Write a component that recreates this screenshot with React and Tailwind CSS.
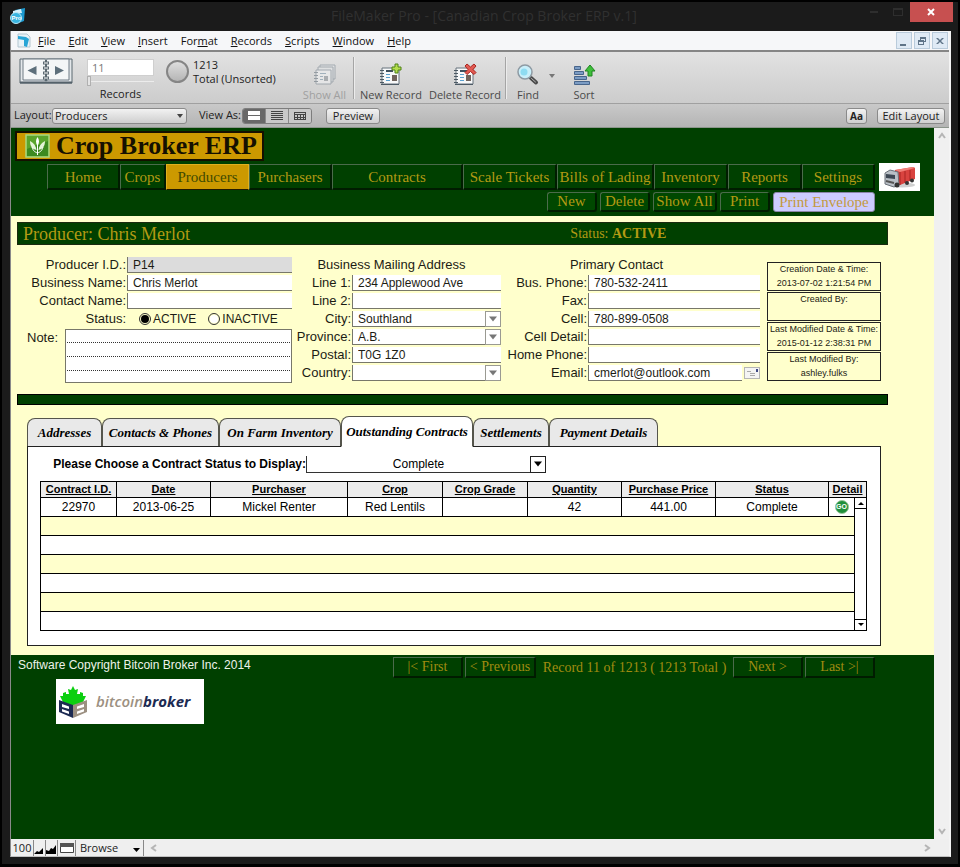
import React, { useState } from 'react';

const MENUS = [
    ['', 'F', 'ile'], ['', 'E', 'dit'], ['', 'V', 'iew'], ['', 'I', 'nsert'], ['For', 'm', 'at'],
    ['', 'R', 'ecords'], ['', 'S', 'cripts'], ['', 'W', 'indow'], ['', 'H', 'elp'],
];

const NAV = ['Home', 'Crops', 'Producers', 'Purchasers', 'Contracts', 'Scale Tickets', 'Bills of Lading', 'Inventory', 'Reports', 'Settings'];

const ACTIONS = [
    { label: 'New', width: 'w-[50px]' },
    { label: 'Delete', width: 'w-[50px]' },
    { label: 'Show All', width: 'w-[64px]' },
    { label: 'Print', width: 'w-[50px]' },
    { label: 'Print Envelope', width: 'w-[102px]', light: true },
];

const TABS = [
    { label: 'Addresses', width: 'w-[75px]' },
    { label: 'Contacts & Phones', width: 'w-[117px]' },
    { label: 'On Farm Inventory', width: 'w-[122px]' },
    { label: 'Outstanding Contracts', width: 'w-[132px]' },
    { label: 'Settlements', width: 'w-[76px]' },
    { label: 'Payment Details', width: 'w-[109px]' },
];

const COLUMNS = [
    { label: 'Contract I.D.', width: 'w-[76px]' },
    { label: 'Date', width: 'w-[94px]' },
    { label: 'Purchaser', width: 'w-[137px]' },
    { label: 'Crop', width: 'w-[95px]' },
    { label: 'Crop Grade', width: 'w-[85px]' },
    { label: 'Quantity', width: 'w-[94px]' },
    { label: 'Purchase Price', width: 'w-[94px]' },
    { label: 'Status', width: 'w-[113px]' },
    { label: 'Detail', width: 'w-[26px]' },
];

const CONTRACT = ['22970', '2013-06-25', 'Mickel Renter', 'Red Lentils', '', '42', '441.00', 'Complete'];

const STAMPS = [
    ['Creation Date & Time:', '2013-07-02 1:21:54 PM'],
    ['Created By:', ''],
    ['Last Modified Date & Time:', '2015-01-12 2:38:31 PM'],
    ['Last Modified By:', 'ashley.fulks'],
];

/* ---------- Icons ---------- */

const AppIcon = () => (
    <svg width="17" height="17" viewBox="0 0 17 17">
        <path d="M5 2l10-2-1 13-5 2z" fill="#1d9ad0" />
        <path d="M3 3l8-2 1 4-9 1z" fill="#d8f2fb" />
        <circle cx="6" cy="10" r="5.5" fill="#39b5e0" stroke="#b9e6f5" />
        <text x="1.5" y="12" fontSize="6" fontFamily="Liberation Sans" fontWeight="bold" fill="#fff">Pro</text>
    </svg>
);

const DocIcon = () => (
    <svg width="14" height="15" viewBox="0 0 14 15">
        <path d="M1 1h9l3 3v10H1z" fill="#e8f2f7" stroke="#b3c6d0" />
        <path d="M1 3l8 1 3 2-2 8-3-1V7L1 6z" fill="#27a5d6" />
    </svg>
);

const BookIcon = () => (
    <svg width="54" height="27" viewBox="0 0 54 27">
        <path d="M1 1h52v24H1z" fill="#e3e7ea" stroke="#5b6871" />
        <path d="M4 1h21c1 0 2 1 2 2 0-1 1-2 2-2h21v21H29l-2 1-2-1H4z" fill="#f4f6f7" stroke="#6e7b84" />
        <path d="M1 24.500h52" stroke="#54616a" strokeWidth="2" />
        <path d="M17.500 8v9l-9-4.500zM36 8v9l9-4.500z" fill="#5d6f7b" />
        <path d="M27 2v21" stroke="#5b6871" strokeWidth="2" />
        <path d="M24 5h6M24 10h6M24 15h6M24 20h6" stroke="#5b6871" strokeWidth="3" />
        <path d="M25 5h4M25 10h4M25 15h4M25 20h4" stroke="#fff" />
    </svg>
);

const RecordIcon = ({ mark }) => (
    <svg width="24" height="24" viewBox="0 0 24 24">
        <path d="M3 5h17v16H3z" fill="#f7f8f9" stroke="#66737d" />
        <path d="M1 7.500h4M1 10.500h4M1 13.500h4M1 16.500h4M1 19.500h4" stroke="#4c5a65" />
        <path d="M7 8h7" stroke="#3f505e" strokeWidth="2" />
        <path d="M7 11.500h4M7 14.500h4M7 17.500h4" stroke="#5aa0cf" />
        <path d="M13 12h5v6h-5z" fill="#70635c" />
        <path d="M2 21.500h18" stroke="#4c5a65" />
        {mark === 'new' && <path d="M16 1h3v3h3v3h-3v3h-3V7h-3V4h3z" fill="#b4dd4c" stroke="#4e8217" />}
        {mark === 'delete' && <path d="M14 1l3.500 3L21 1l2 2-3 3.500 3 3-2 2-3.500-3-3.500 3-2-2 3-3-3-3.500z" fill="#e25a52" stroke="#a82620" />}
    </svg>
);

const ShowAllIcon = () => (
    <svg width="24" height="24" viewBox="0 0 24 24" opacity="0.6">
        <path d="M7 2h15v14H7z" fill="#e3e5e7" stroke="#7e8a94" />
        <path d="M5 4h15v15H5z" fill="#e3e5e7" stroke="#7e8a94" />
        <path d="M3 7h15v14H3z" fill="#f0f1f2" stroke="#7e8a94" />
        <path d="M1 9.500h4M1 12.500h4M1 15.500h4M1 18.500h4" stroke="#68747e" />
        <path d="M7 10.500h6M7 13.500h3M7 16.500h3" stroke="#7d97aa" />
        <path d="M11 13h4v5h-4z" fill="#8c9298" />
    </svg>
);

const FindIcon = () => (
    <svg width="24" height="24" viewBox="0 0 24 24">
        <path d="M13 14l2 1" stroke="#777" strokeWidth="2" />
        <path d="M15 15l5 4.500" stroke="#4a4a4a" strokeWidth="4" strokeLinecap="round" />
        <path d="M15.500 15.500l4 3.500" stroke="#b5b5b5" strokeLinecap="round" />
        <circle cx="9" cy="9" r="7" fill="#c9effa" stroke="#8e9aa3" strokeWidth="1.500" />
        <circle cx="8" cy="9" r="3.500" fill="#8edcf2" />
    </svg>
);

const SortIcon = () => (
    <svg width="24" height="24" viewBox="0 0 24 24">
        <g fill="#7b9cc4" stroke="#48658b">
            <path d="M2.500 3.500h6v3h-6zM2.500 8.500h9v3h-9zM2.500 13.500h12v3h-12zM2.500 18.500h15v3h-15z" />
        </g>
        <path d="M18 2l5 6h-3v5h-4V8h-3z" fill="#3fbf3b" stroke="#1e8420" />
    </svg>
);

const CropLogo = () => (
    <svg width="25" height="24" viewBox="0 0 25 24">
        <rect x="1" y="1" width="23" height="22" fill="#5aa52c" stroke="#a9d77e" strokeWidth="1.500" />
        <path d="M2 15c8-4 14-4 21-8v15H2z" fill="#3c8a20" />
        <path d="M12.500 3c2 3 2 6 0 9-2-3-2-6 0-9z" fill="#fff" />
        <path d="M5 7c4 2 6 5 6.500 9C7 15 5 12 5 7zM20 7c-4 2-6 5-6.500 9 4.500-1 6.500-4 6.500-9z" fill="#e4f4d6" />
        <path d="M12.500 11v10M7 13c1 4 3 5 5.500 6M18 13c-1 4-3 5-5.500 6" stroke="#fff" fill="none" />
    </svg>
);

const TruckIcon = () => (
    <svg width="34" height="24" viewBox="0 0 34 24">
        <ellipse cx="19" cy="20" rx="13" ry="2.500" fill="#d0d0d0" />
        <path d="M12 5l18-3 2 1v11l-15 6-5-2z" fill="#d9433f" />
        <path d="M12 5l18-3 2 1-15 4z" fill="#f08078" />
        <path d="M17 7v13M22 6v12M27 5v11" stroke="#a92522" />
        <path d="M2 8l5-3 8 2 1 13-5 2-9-3z" fill="#b9bfc6" stroke="#6a7078" />
        <path d="M3 9l9 1v4l-9-1z" fill="#3e4854" />
        <path d="M3 16l8 2" stroke="#555" strokeWidth="2" />
        <circle cx="14" cy="20" r="2.500" fill="#333" />
        <circle cx="24" cy="18" r="2" fill="#333" />
        <circle cx="29" cy="15.500" r="2" fill="#333" />
    </svg>
);

const BrokerLogo = () => (
    <svg width="30" height="34" viewBox="0 0 30 34">
        <path d="M15 1l2 4 3-1-1 5 3 0 0-2 3 1 0 3 3 0-3 6-10 4-10-4-3-6 3 0 0-3 3-1 0 2 3 0-1-5 3 1z" fill="#0bcf10" />
        <path d="M1 15l14 5v13L1 27z" fill="#1c2a52" />
        <path d="M29 15l-14 5v13l14-6z" fill="#9c9081" />
        <path d="M4 19l7 2.500v2.500l-7-2zM4 24l7 2.500V29l-7-2.500zM26 19l-7 2.500v2.500l7-2zM26 24l-7 2.500V29l7-2.500z" fill="#fff" />
    </svg>
);

const Triangle = () => (
    <svg width="8" height="6" viewBox="0 0 8 6"><path d="M0 .5h8L4 5.500z" fill="currentColor" /></svg>
);

const Chevron = ({ d }) => (
    <svg width="8" height="8" viewBox="0 0 8 8" fill="none" stroke="#b5b5b5" strokeWidth="2"><path d={d} /></svg>
);

/* ---------- Form pieces ---------- */

const Field = ({ id, label, value = '', labelWidth, gray, children }) => (
    <div className="flex h-[18px] items-center">
        <label htmlFor={id} className={`${labelWidth} shrink-0 whitespace-nowrap pr-px text-right text-[13px] leading-[18px]`}>{label}</label>
        <input
            id={id}
            defaultValue={value}
            className={`h-4 min-w-0 flex-1 border-b border-l border-[#77776a] pl-[5px] text-xs leading-[15px] outline-none ${gray ? 'bg-[#dcdcdc]' : 'bg-white'}`}
        />
        {children}
    </div>
);

const SelectField = ({ id, label, value = '', labelWidth }) => (
    <div className="flex h-[18px] items-center">
        <label htmlFor={id} className={`${labelWidth} shrink-0 whitespace-nowrap pr-px text-right text-[13px] leading-[18px]`}>{label}</label>
        <div className="relative h-4 min-w-0 flex-1">
            <select id={id} defaultValue={value} className="block h-4 w-full appearance-none border-b border-l border-[#77776a] bg-white pl-[5px] text-xs leading-4 outline-none">
                <option>{value}</option>
            </select>
            <span className="pointer-events-none absolute inset-y-0 right-0 flex w-4 items-center justify-center border border-[#9a9a92] bg-white text-[#777]">
                <Triangle />
            </span>
        </div>
    </div>
);

const ToolButton = ({ icon, label, disabled, width }) => (
    <button disabled={disabled} className={`mt-[11px] flex flex-col items-center text-[11px] leading-4 ${disabled ? 'text-[#a0a0a0]' : 'text-[#4a4a4a]'} ${width}`}>
        {icon}
        <span className="whitespace-nowrap">{label}</span>
    </button>
);

const bevel = 'rounded-[3px] border border-[#8a8a8a] bg-gradient-to-b from-[#f2f2f2] to-[#cfcfcf]';
const darkBevel = 'border-t border-l border-b-2 border-r-2 border-t-[#4b6b4b] border-l-[#4b6b4b] border-b-[#001c00] border-r-[#001c00]';

const TitleBar = () => (
    <div className="flex h-[29px] items-start justify-between pl-2">
        <div className="flex h-[29px] w-32 items-center"><AppIcon /></div>
        <div className="whitespace-nowrap pt-0.5 text-sm leading-6 text-[#303030]">FileMaker Pro - [Canadian Crop Broker ERP v.1]</div>
        <div className="flex w-32 justify-end pr-[5px]">
            <button aria-label="Minimize" className="flex h-[19px] w-6 items-center justify-center">
                <span className="h-0.5 w-2 bg-[#2e2e2e]" />
            </button>
            <button aria-label="Maximize" className="flex h-[19px] w-6 items-center justify-center">
                <span className="h-2 w-2.5 border border-t-2 border-[#2e2e2e]" />
            </button>
            <button aria-label="Close" className="flex h-5 w-[43px] items-center justify-center bg-[#c75050]">
                <svg width="8" height="8" viewBox="0 0 8 8" stroke="#fff" strokeWidth="2"><path d="M1 1l6 6M7 1L1 7" /></svg>
            </button>
        </div>
    </div>
);

const MenuBar = () => (
    <div className="flex h-[21px] items-center border-b-2 border-[#858585] bg-[#f6f7f9] pl-1.5 text-[#111]">
        <DocIcon />
        <nav className="flex flex-1 gap-[13px] pl-[7px] text-[11px]">
            {MENUS.map(([pre, key, rest]) => (
                <button key={key + rest} className="leading-[18px]">{pre}<span className="underline">{key}</span>{rest}</button>
            ))}
        </nav>
        <div className="flex gap-0.5 pr-px text-[#5f7488]">
            {['M2 9h6v2H2z', 'M4 2h6v5H8v3H2V5h2zM5 4v1h3v1h1V4zM3 7v2h4V7z', 'M2 3h2l2 2 2-2h2L7 6l3 3H8L6 7 4 9H2l3-3z'].map((d, i) => (
                <button key={d} aria-label={['Minimize record window', 'Restore record window', 'Close record window'][i]} className="flex h-[17px] w-4 items-center justify-center border border-[#b9cbdb] bg-[#dfeaf5]">
                    <svg width="12" height="12" viewBox="0 0 12 12" fill="currentColor" fillRule="evenodd"><path d={d} /></svg>
                </button>
            ))}
        </div>
    </div>
);

const Toolbar = () => (
    <div className="flex h-[52px] items-start border-b border-[#a0a0a0] bg-gradient-to-b from-[#e2e2e2] to-[#cccccc] pl-2 text-[11px] text-[#222]">
        <button aria-label="Flip through records" className="mt-1.5"><BookIcon /></button>
        <div className="ml-3.5 mt-[7px] flex w-[67px] flex-col">
            <input aria-label="Record number" defaultValue="11" className="h-[17px] w-full border border-[#cfcfcf] bg-white pl-1 text-[11px] text-[#777] outline-none" />
            <div className="flex h-2.5 items-center">
                <span className="h-2.5 w-1 border border-[#b0b0b0] bg-[#e4e4e4]" />
                <span className="h-px flex-1 bg-[#ececec]" />
            </div>
            <span className="text-center leading-4">Records</span>
        </div>
        <button aria-label="Found set" className="ml-3 mt-2 h-[23px] w-[23px] rounded-full border-2 border-[#858585] bg-gradient-to-b from-[#dedede] to-[#b5b5b5]" />
        <div className="ml-1 mt-1.5 w-[103px] whitespace-nowrap leading-[14px]">
            <div>1213</div>
            <div>Total (Unsorted)</div>
        </div>
        <ToolButton icon={<ShowAllIcon />} label="Show All" disabled width="w-[57px]" />
        <span className="mt-[5px] h-[42px] w-0.5 border-l border-[#a5a5a5] bg-[#ececec]" />
        <ToolButton icon={<RecordIcon mark="new" />} label="New Record" width="w-[72px]" />
        <ToolButton icon={<RecordIcon mark="delete" />} label="Delete Record" width="w-[76px]" />
        <span className="ml-0.5 mt-[5px] h-[42px] w-0.5 border-l border-[#a5a5a5] bg-[#ececec]" />
        <ToolButton icon={<FindIcon />} label="Find" width="w-[42px]" />
        <button aria-label="Find options" className="mt-[22px] text-[#777]"><svg width="6" height="4" viewBox="0 0 6 4"><path d="M0 0h6L3 4z" fill="currentColor" /></svg></button>
        <span className="w-2" />
        <ToolButton icon={<SortIcon />} label="Sort" width="w-[42px]" />
    </div>
);

const LayoutBar = () => (
    <div className="flex h-6 items-center border-b border-[#8c958c] bg-gradient-to-b from-[#c9c9c9] to-[#b4b4b4] pl-[3px] pr-1 text-[11px] text-[#222]">
        <label htmlFor="layout" className="w-[38px]">Layout:</label>
        <div className="relative">
            <select id="layout" className={`${bevel} block h-4 w-[135px] appearance-none pl-0.5 leading-[14px] outline-none`}>
                <option>Producers</option>
            </select>
            <svg width="6" height="4" viewBox="0 0 6 4" className="pointer-events-none absolute right-1 top-1.5"><path d="M0 0h6L3 4z" fill="#444" /></svg>
        </div>
        <span className="ml-3 w-[43px] whitespace-nowrap">View As:</span>
        <div className="flex h-4 w-[70px] overflow-hidden rounded-[3px] border border-[#7d7d7d]">
            <button aria-label="Form view" className="flex flex-1 items-center justify-center bg-[#686868]">
                <svg width="14" height="10" viewBox="0 0 14 10" fill="#fff"><path d="M1 0h12v4H1zM1 5h12v4H1z" /></svg>
            </button>
            <button aria-label="List view" className="flex flex-1 items-center justify-center border-x border-[#8a8a8a] bg-[#c9c9c9]">
                <svg width="14" height="10" viewBox="0 0 14 10" fill="#444"><path d="M1 0h12v1H1zM1 2h12v1H1zM1 4h12v1H1zM1 6h12v1H1zM1 8h12v1H1z" /></svg>
            </button>
            <button aria-label="Table view" className="flex flex-1 items-center justify-center bg-[#c9c9c9]">
                <svg width="14" height="10" viewBox="0 0 14 10" stroke="#444" fill="none"><path d="M1 1.500h12M1.500 1v8M12.500 1v8M1 3.500h12M1 6.500h12M1 8.500h12M4.500 3v6M7.500 3v6M10.500 3v6" /></svg>
            </button>
        </div>
        <button className={`${bevel} ml-3.5 h-4 w-[54px] leading-[14px]`}>Preview</button>
        <div className="ml-auto flex gap-2.5">
            <button aria-label="Formatting bar" className={`${bevel} h-4 w-[21px] text-[10px] font-bold leading-[14px]`}>Aa</button>
            <button className={`${bevel} h-4 w-[68px] whitespace-nowrap leading-[14px]`}>Edit Layout</button>
        </div>
    </div>
);

const Header = () => (
    <header className="h-[88px] bg-[#004000] pl-1 pr-3.5 pt-[3px] font-['Liberation_Serif',serif]">
        <div className="flex h-[30px] w-[249px] items-center gap-1.5 border-2 border-[#151000] bg-[#cc9900] pl-2">
            <CropLogo />
            <h1 className="whitespace-nowrap text-[26px] font-bold leading-[26px] text-[#151000]">Crop Broker ERP</h1>
        </div>
        <div className="mt-0.5 flex pl-8">
            <div className="flex-1">
                <nav className="mt-px grid h-[26px] grid-cols-[73fr_46fr_83fr_83fr_131fr_94fr_97fr_74fr_74fr_73fr]">
                    {NAV.map(name => (
                        <button
                            key={name}
                            className={`whitespace-nowrap text-[15px] leading-[22px] ${name === 'Producers' ? 'border border-[#e0b020] border-b-[#221a00] bg-[#cc9900] text-[#3f4a00]' : `${darkBevel} text-[#b39a14]`}`}
                        >
                            {name}
                        </button>
                    ))}
                </nav>
                <div className="mt-0.5 flex justify-end gap-[3px]">
                    {ACTIONS.map(({ label, width, light }) => (
                        <button
                            key={label}
                            className={`${width} h-5 whitespace-nowrap rounded-[3px] text-[15px] leading-[17px] ${light ? 'border border-[#8a86a8] bg-[#ccccff] text-[#c39a3c]' : `${darkBevel} bg-[#004800] text-[#b39a14]`}`}
                        >
                            {label}
                        </button>
                    ))}
                </div>
            </div>
            <div className="ml-1 flex h-7 w-[41px] items-center justify-center bg-white"><TruckIcon /></div>
        </div>
    </header>
);

const Details = () => {
    const [status, setStatus] = useState('ACTIVE');

    return (
        <section className="grid grid-cols-[265fr_209fr_259fr_121fr] pl-4 pr-[53px] pt-[11px] text-[#1c1c14]">
            <div className="min-w-0">
                <Field id="producer-id" label="Producer I.D.:" value="P14" labelWidth="w-[100px]" gray />
                <Field id="business-name" label="Business Name:" value="Chris Merlot" labelWidth="w-[100px]" />
                <Field id="contact-name" label="Contact Name:" labelWidth="w-[100px]" />
                <div className="flex h-[18px] items-center text-xs">
                    <span className="w-[100px] pr-px text-right text-[13px] leading-[18px]">Status:</span>
                    {['ACTIVE', 'INACTIVE'].map(s => (
                        <label key={s} className="ml-3 flex items-center gap-0.5">
                            <input
                                type="radio"
                                name="status"
                                checked={status === s}
                                onChange={() => setStatus(s)}
                                className="h-3 w-3 appearance-none rounded-full border border-[#333] bg-white bg-clip-content p-px checked:bg-black"
                            />
                            {s}
                        </label>
                    ))}
                </div>
                <div className="flex pt-px">
                    <label htmlFor="note" className="w-[38px] text-[13px] leading-[18px]">Note:</label>
                    <textarea
                        id="note"
                        className="h-[54px] min-w-0 flex-1 resize-none border border-[#77776a] bg-white bg-[image:repeating-linear-gradient(90deg,#fff_0_1px,transparent_1px_2px),repeating-linear-gradient(transparent_0_12px,#333_12px_13px,transparent_13px_14px)] text-xs leading-[14px] outline-none"
                    />
                </div>
            </div>
            <div className="min-w-0">
                <h2 className="pr-2.5 text-center text-[13px] leading-[18px]">Business Mailing Address</h2>
                <Field id="line1" label="Line 1:" value="234 Applewood Ave" labelWidth="w-[60px]" />
                <Field id="line2" label="Line 2:" labelWidth="w-[60px]" />
                <SelectField id="city" label="City:" value="Southland" labelWidth="w-[60px]" />
                <SelectField id="province" label="Province:" value="A.B." labelWidth="w-[60px]" />
                <Field id="postal" label="Postal:" value="T0G 1Z0" labelWidth="w-[60px]" />
                <SelectField id="country" label="Country:" labelWidth="w-[60px]" />
            </div>
            <div className="min-w-0">
                <h2 className="pr-7 text-center text-[13px] leading-[18px]">Primary Contact</h2>
                <Field id="bus-phone" label="Bus. Phone:" value="780-532-2411" labelWidth="w-[87px]" />
                <Field id="fax" label="Fax:" labelWidth="w-[87px]" />
                <Field id="cell" label="Cell:" value="780-899-0508" labelWidth="w-[87px]" />
                <Field id="cell-detail" label="Cell Detail:" labelWidth="w-[87px]" />
                <Field id="home-phone" label="Home Phone:" labelWidth="w-[87px]" />
                <Field id="email" label="Email:" value="cmerlot@outlook.com" labelWidth="w-[87px]">
                    <button aria-label="Send email" className="ml-0.5">
                        <svg width="16" height="12" viewBox="0 0 16 12">
                            <rect x=".5" y=".5" width="15" height="11" fill="#f4f4f4" stroke="#b5b5b5" />
                            <path d="M3 4.500h4M6 6.500h5M6 8.500h5" stroke="#aaa" />
                            <path d="M12 2h2v3h-2z" fill="#3f4a86" />
                        </svg>
                    </button>
                </Field>
            </div>
            <div className="flex min-w-0 flex-col gap-px pl-[7px] pt-1.5">
                {STAMPS.map(([label, value]) => (
                    <div key={label} className="flex h-[29px] flex-col items-center whitespace-nowrap border border-[#222] text-[9px] leading-3">
                        <div>{label}</div>
                        <div className="pt-0.5">{value}</div>
                    </div>
                ))}
            </div>
        </section>
    );
};

const ContractsPanel = () => {
    const [tab, setTab] = useState('Outstanding Contracts');

    return (
        <section className="pb-[9px] pl-4 pr-[53px] pt-[11px]">
            <div role="tablist" className="flex h-[30px] items-end font-['Liberation_Serif',serif]">
                {TABS.map(({ label, width }) => (
                    <button
                        key={label}
                        role="tab"
                        aria-selected={tab === label}
                        onClick={() => setTab(label)}
                        className={`${width} shrink-0 whitespace-nowrap rounded-t-lg border border-b-0 border-[#55554c] text-[13px] font-bold italic text-black ${tab === label ? 'h-[30px] bg-white' : 'h-7 bg-[#e9e9e9]'}`}
                    >
                        {label}
                    </button>
                ))}
            </div>
            <div className="flex">
                <div className="w-[314px] border-t border-[#222]" />
                <div className="w-[132px] border-x border-t border-x-[#55554c] border-t-white" />
                <div className="flex-1 border-t border-[#222]" />
            </div>
            <div className="border border-t-0 border-[#222] bg-white pb-3.5 pl-3 pr-3.5 pt-[9px]">
                <div className="flex h-[17px] items-center pb-px">
                    <label htmlFor="contract-status" className="w-[266px] whitespace-nowrap text-right text-xs font-bold leading-4">Please Choose a Contract Status to Display:</label>
                    <div className="relative">
                        <select id="contract-status" className="block h-[17px] w-[240px] appearance-none border-b border-l border-[#333] bg-white pr-4 text-center text-xs leading-4 outline-none [text-align-last:center]">
                            <option>Complete</option>
                        </select>
                        <span className="pointer-events-none absolute inset-y-0 right-0 flex w-4 items-center justify-center border border-[#222] bg-white">
                            <Triangle />
                        </span>
                    </div>
                </div>
                <table className="mt-2 w-full table-fixed border-collapse border border-black text-center text-xs">
                    <colgroup>
                        {COLUMNS.map(c => <col key={c.label} className={c.width} />)}
                        <col className="w-[12px]" />
                    </colgroup>
                    <thead>
                        <tr className="h-4 bg-[#ececec]">
                            {COLUMNS.map(c => (
                                <th key={c.label} colSpan={c.label === 'Detail' ? 2 : 1} className="whitespace-nowrap border border-black p-0 text-[11px] font-bold leading-[15px] underline">{c.label}</th>
                            ))}
                        </tr>
                    </thead>
                    <tbody>
                        <tr className="h-[19px]">
                            {CONTRACT.map((cell, i) => (
                                <td key={i} className="border border-black p-0 leading-[18px]">{cell}</td>
                            ))}
                            <td className="border border-black p-0">
                                <button aria-label="Go to contract" className="mx-auto block h-3.5 w-3.5 rounded-full border border-[#9cc79c] bg-[#1f8f3a] text-center text-[7px] font-bold leading-3 text-white">GO</button>
                            </td>
                            <td rowSpan={7} className="h-px border border-black p-0">
                                <div className="flex h-full flex-col justify-between">
                                    <button aria-label="Scroll up" className="flex h-[11px] items-center justify-center border-b border-black"><svg width="6" height="4" viewBox="0 0 6 4"><path d="M0 4h6L3 1z" /></svg></button>
                                    <button aria-label="Scroll down" className="flex h-[11px] items-center justify-center border-t border-black"><svg width="6" height="4" viewBox="0 0 6 4"><path d="M0 0h6L3 3z" /></svg></button>
                                </div>
                            </td>
                        </tr>
                        {[0, 1, 2, 3, 4, 5].map(i => (
                            <tr key={i} className={`h-[19px] ${i % 2 ? 'bg-white' : 'bg-[#ffffcc]'}`}>
                                <td colSpan={9} className="border border-black p-0" />
                            </tr>
                        ))}
                    </tbody>
                </table>
            </div>
        </section>
    );
};

const Footer = () => (
    <footer className="flex flex-1 items-start justify-between bg-[#004000] pl-[7px] pr-[59px] pt-0.5">
        <div>
            <p className="text-xs leading-4 text-[#eef3ea]">Software Copyright Bitcoin Broker Inc. 2014</p>
            <div className="ml-[38px] mt-1.5 flex h-[45px] w-[148px] items-center gap-2 bg-white pl-0.5 font-['Open_Sans',sans-serif] text-[15px] font-semibold italic">
                <BrokerLogo />
                <span className="text-[#9c9081]">bitcoin<span className="font-bold text-[#1c2a52]">broker</span></span>
            </div>
        </div>
        <div className="flex items-center gap-0.5 font-['Liberation_Serif',serif] text-sm text-[#a08c10]">
            <button className={`${darkBevel} h-[21px] w-[70px] leading-[18px]`}>|&lt; First</button>
            <button className={`${darkBevel} h-[21px] w-[71px] whitespace-nowrap leading-[18px]`}>&lt; Previous</button>
            <span className="w-[193px] whitespace-nowrap text-center">Record 11 of 1213 ( 1213 Total )</span>
            <button className={`${darkBevel} h-[21px] w-[70px] leading-[18px]`}>Next &gt;</button>
            <button className={`${darkBevel} h-[21px] w-[70px] leading-[18px]`}>Last &gt;|</button>
        </div>
    </footer>
);

const StatusBar = () => (
    <div className="flex h-[17px] items-center bg-[#efefef] pr-[18px] text-[11px] text-[#222]">
        <button className="h-4 w-[23px] border-r border-[#888] leading-4">100</button>
        <button aria-label="Zoom out" className="flex h-4 w-3 items-end border-r border-[#888] pb-0.5"><svg width="10" height="6" viewBox="0 0 10 6"><path d="M0 6l3-3 2 1 4-4v6z" /></svg></button>
        <button aria-label="Zoom in" className="flex h-4 w-3 items-end border-r border-[#888] pb-0.5"><svg width="11" height="9" viewBox="0 0 11 9"><path d="M0 9V5l3 1 2-3 2 1 3-4v9z" /></svg></button>
        <button aria-label="Toggle status area" className="flex h-4 w-[18px] items-center justify-center border-r border-[#888]"><svg width="14" height="10" viewBox="0 0 14 10"><path d="M.5.5h13v9H.5z" fill="#fff" stroke="#444" /><path d="M0 0h14v4H0z" fill="#555" /></svg></button>
        <div className="relative">
            <select aria-label="Mode" className="block h-4 w-[68px] appearance-none border-r border-[#888] bg-[#efefef] pl-1 leading-4 outline-none"><option>Browse</option></select>
            <svg width="7" height="4" viewBox="0 0 7 4" className="pointer-events-none absolute right-1 top-2"><path d="M0 0h7L3.500 4z" /></svg>
        </div>
        <div className="flex flex-1 justify-between pl-1.5">
            <Chevron d="M6 1L2 4l4 3" />
            <Chevron d="M2 1l4 3-4 3" />
        </div>
    </div>
);

export default function App() {
    return (
        <div className="flex min-h-screen flex-col bg-black px-0.5 pb-[3px] pt-0.5 font-['Liberation_Sans',sans-serif]">
            <div className="flex flex-1 flex-col bg-[#1b1b1b] font-['Open_Sans',sans-serif]">
                <TitleBar />
                <div className="mb-[7px] ml-2 mr-[7px] flex flex-1 flex-col border-l border-r-2 border-b border-l-[#8a8a8a] border-r-[#f4f4f4] border-b-[#c0c0c0] bg-[#f0f0f0]">
                    <MenuBar />
                    <Toolbar />
                    <LayoutBar />
                    <div className="flex flex-1">
                        <main className="flex min-w-0 flex-1 flex-col bg-[#ffffcc] font-['Liberation_Sans',sans-serif]">
                            <Header />
                            <div className="ml-1.5 mr-[46px] mt-1.5 flex h-[23px] items-center border border-[#1a2a10] bg-[#004000] pl-[5px] font-['Liberation_Serif',serif] text-[#b39a14]">
                                <h2 className="flex-[548] text-lg leading-[22px]">Producer: Chris Merlot</h2>
                                <p className="flex-[317] text-sm leading-[22px]">Status: <b>ACTIVE</b></p>
                            </div>
                            <Details />
                            <div className="ml-1.5 mr-[46px] mt-[11px] h-[11px] border border-black bg-[#004000]" />
                            <ContractsPanel />
                            <Footer />
                        </main>
                        <div className="flex w-[15px] flex-col items-center justify-between bg-[#f0f0f0] py-1">
                            <Chevron d="M1 6l3-4 3 4" />
                            <Chevron d="M1 2l3 4 3-4" />
                        </div>
                    </div>
                    <StatusBar />
                </div>
            </div>
        </div>
    );
}
